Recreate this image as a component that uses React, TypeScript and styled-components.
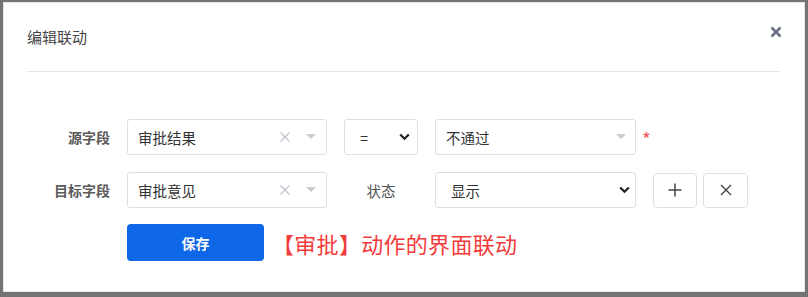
import React from "react";
import styled, { createGlobalStyle } from "styled-components";

const Global = createGlobalStyle`
  html, body { margin: 0; padding: 0; }
  body {
    background: #747474;
    font-family: "Noto Sans CJK SC", "Noto Sans", sans-serif;
    width: 808px;
    height: 297px;
    overflow: hidden;
  }
  #root { padding: 2px 0 0 3px; }
`;

const Modal = styled.div`
  width: 800px;
  height: 288px;
  background: #fff;
  border: 1px solid #e8e8e8;
  box-sizing: content-box;
  display: flex;
  flex-direction: column;
`;

const Header = styled.div`
  margin: 0 24px 0 23px;
  height: 68px;
  border-bottom: 1px solid #e4e4e4;
  display: flex;
  align-items: flex-start;
  justify-content: space-between;
`;

const Title = styled.div`
  margin-top: 23px;
  font-size: 15px;
  line-height: 22px;
  color: #444;
`;

const Close = styled.div`
  margin-top: 22px;
  margin-right: -3px;
  width: 14px;
  height: 14px;
  display: flex;
  align-items: center;
  justify-content: center;
`;

const Body = styled.div`
  padding: 47px 0 0 23px;
  display: flex;
  flex-direction: column;
  gap: 17px;
`;

const Row = styled.div`
  display: flex;
  align-items: center;
  height: 36px;
`;

const Label = styled.div`
  width: 83px;
  margin-right: 17px;
  text-align: right;
  font-size: 14px;
  font-weight: 700;
  color: #5a5a5a;
`;

const Box = styled.div<{ $w: number; $pad?: number }>`
  width: ${(p) => p.$w}px;
  height: 36px;
  box-sizing: border-box;
  border: 1px solid #dcdfe6;
  border-radius: 3px;
  display: flex;
  align-items: center;
  padding: 0 0 0 ${(p) => p.$pad ?? 10}px;
  font-size: 14.5px;
  color: #333;
  background: #fff;
`;

const Value = styled.span`
  flex: 1;
`;

const Gap = styled.div<{ $w: number }>`
  width: ${(p) => p.$w}px;
  flex: none;
`;

const Plain = styled.div`
  width: 74px;
  text-align: center;
  font-size: 14.5px;
  color: #555;
`;

const Star = styled.span`
  color: #f25757;
  font-size: 19px;
  line-height: 1;
  margin-left: 6px;
  margin-top: 2px;
`;

const IconBtn = styled.div<{ $w: number }>`
  width: ${(p) => p.$w}px;
  height: 35px;
  box-sizing: border-box;
  border: 1px solid #dcdfe6;
  border-radius: 4px;
  display: flex;
  align-items: center;
  justify-content: center;
  background: #fff;
`;

const Footer = styled.div`
  display: flex;
  align-items: center;
  padding-left: 100px;
  margin-top: -1px;
`;

const SaveBtn = styled.div`
  width: 137px;
  height: 37px;
  border-radius: 4px;
  background: #0e67e6;
  color: #fff;
  font-size: 14px;
  font-weight: 700;
  display: flex;
  align-items: center;
  justify-content: center;
`;

const Note = styled.div`
  margin-left: 8px;
  font-size: 22px;
  color: #f23b3b;
  letter-spacing: 0.3px;
`;

const ClearX = () => (
  <svg width="12" height="12" viewBox="0 0 12 12" style={{ marginRight: 15 }}>
    <path d="M1.5 1.5 L10.5 10.5 M10.5 1.5 L1.5 10.5" stroke="#c0c4cc" strokeWidth="1.3" />
  </svg>
);

const Caret = ({ mr = 10 }: { mr?: number }) => (
  <svg width="10" height="6" viewBox="0 0 10 6" style={{ marginRight: mr }}>
    <path d="M0 0 L10 0 L5 5 Z" fill="#c8ccd3" />
  </svg>
);

const Chevron = ({ mr }: { mr: number }) => (
  <svg width="11" height="8" viewBox="0 0 11 8" style={{ marginRight: mr }}>
    <path d="M1.2 1.5 L5.5 5.8 L9.8 1.5" stroke="#222" strokeWidth="2.2" fill="none" />
  </svg>
);

export default function App() {
  return (
    <>
      <Global />
      <Modal>
        <Header>
          <Title>编辑联动</Title>
          <Close>
            <svg width="12" height="12" viewBox="0 0 12 12">
              <path d="M1.5 1.5 L10.5 10.5 M10.5 1.5 L1.5 10.5" stroke="#6b7186" strokeWidth="2.6" />
            </svg>
          </Close>
        </Header>
        <Body>
          <Row>
            <Label>源字段</Label>
            <Box $w={200}>
              <Value>审批结果</Value>
              <ClearX />
              <Caret />
            </Box>
            <Gap $w={17} />
            <Box $w={74} $pad={15}>
              <Value>=</Value>
              <Chevron mr={7} />
            </Box>
            <Gap $w={17} />
            <Box $w={201}>
              <Value>不通过</Value>
              <Caret mr={9} />
            </Box>
            <Star>*</Star>
          </Row>
          <Row>
            <Label>目标字段</Label>
            <Box $w={200}>
              <Value>审批意见</Value>
              <ClearX />
              <Caret />
            </Box>
            <Gap $w={17} />
            <Plain>状态</Plain>
            <Gap $w={17} />
            <Box $w={201} $pad={15}>
              <Value>显示</Value>
              <Chevron mr={5} />
            </Box>
            <Gap $w={17} />
            <IconBtn $w={44}>
              <svg width="14" height="14" viewBox="0 0 14 14">
                <path d="M7 0.5 V13.5 M0.5 7 H13.5" stroke="#444" strokeWidth="1.5" />
              </svg>
            </IconBtn>
            <Gap $w={6} />
            <IconBtn $w={45}>
              <svg width="12" height="12" viewBox="0 0 12 12">
                <path d="M1 1 L11 11 M11 1 L1 11" stroke="#444" strokeWidth="1.4" />
              </svg>
            </IconBtn>
          </Row>
          <Footer>
            <SaveBtn>保存</SaveBtn>
            <Note>【审批】动作的界面联动</Note>
          </Footer>
        </Body>
      </Modal>
    </>
  );
}
